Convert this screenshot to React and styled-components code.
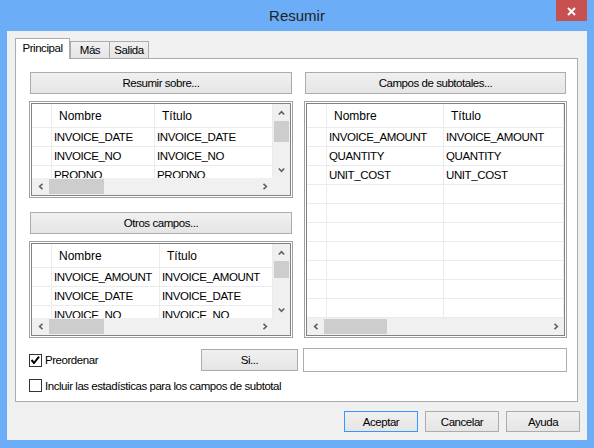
import React from "react";
import styled, { createGlobalStyle } from "styled-components";

const Global = createGlobalStyle`
  html, body { margin: 0; padding: 0; }
  body {
    width: 594px; height: 448px; overflow: hidden;
    font-family: "Liberation Sans", Arial, sans-serif; color: #000;
  }
  * { box-sizing: border-box; }
`;

const Window = styled.div`
  width: 594px; height: 448px; background: #6badf6;
  display: flex; flex-direction: column; padding: 0 7px 8px;
`;

const TitleBar = styled.div`
  height: 31px; flex: none;
  display: grid; grid-template-columns: 1fr auto 1fr; align-items: center;
`;

const Title = styled.div`
  grid-column: 2; font-size: 15px; color: #222; padding-bottom: 1px;
`;

const CloseButton = styled.div`
  grid-column: 3; justify-self: end; align-self: start;
  width: 31px; height: 21px; background: #c75050;
  display: flex; align-items: center; justify-content: center; padding-top: 1px;
`;

const Client = styled.div`
  flex: 1; background: #f0f0f0; display: flex; flex-direction: column;
  padding: 7px 7px 8px 8px;
`;

const TabStrip = styled.div`
  display: flex; align-items: flex-end; height: 20px; flex: none;
  position: relative; z-index: 1;
`;

const Tab = styled.div`
  width: ${p => p.$w}px;
  height: ${p => (p.$active ? 21 : 17)}px;
  margin-bottom: ${p => (p.$active ? -1 : 0)}px;
  margin-left: ${p => p.$ml || 0}px;
  border: 1px solid #acacac; border-bottom: none;
  background: ${p => (p.$active ? "#fff" : "linear-gradient(#f0f0f0, #e5e5e5)")};
  display: flex; align-items: center; justify-content: center;
  padding-bottom: ${p => (p.$active ? 2 : 0)}px;
  font-size: 11.5px; letter-spacing: -0.45px;
`;

const Panel = styled.div`
  background: #fff; border: 1px solid #acacac; margin-right: 2px;
  padding: 13px 10px 9px 13px; display: flex; flex-direction: column;
`;

const Columns = styled.div`
  display: grid; grid-template-columns: 264px 263px; column-gap: 11px;
  height: 266px;
`;

const Column = styled.div`
  display: flex; flex-direction: column; gap: ${p => p.$gap}px; min-height: 0;
`;

const Button = styled.button`
  display: block; font-family: inherit; font-size: 11.5px; letter-spacing: -0.45px; color: #000;
  height: ${p => p.$h || 22}px;
  width: ${p => (p.$w ? `${p.$w}px` : "auto")};
  margin: ${p => (p.$wide ? "0 1px" : "0")};
  flex: none; padding: 0;
  border: 1px solid ${p => (p.$default ? "#3399ff" : "#acacac")};
  background: linear-gradient(#f0f0f0, #e5e5e5);
`;

const GridFrame = styled.div`
  height: ${p => (p.$h ? `${p.$h}px` : "auto")};
  flex: ${p => (p.$grow ? 1 : "none")};
  border: 1px solid #a0a0a0; padding: 1px; background: #fff; min-height: 0;
`;

const GridBody = styled.div`
  height: 100%; border: 1px solid #828282;
  display: grid;
  grid-template-columns: ${p => (p.$v ? "1fr 17px" : "1fr")};
  grid-template-rows: 1fr 17px;
  overflow: hidden;
`;

const TableArea = styled.div`
  overflow: hidden; min-width: 0; min-height: 0;
`;

const Row = styled.div`
  display: grid; grid-template-columns: ${p => p.$cols};
  height: ${p => (p.$header ? 24 : 19)}px; flex: none;
  border-bottom: 1px solid #ebebeb;
`;

const HeadCell = styled.div`
  border-right: 1px solid #ebebeb; padding-left: 7px;
  display: flex; align-items: center; font-size: 12px; white-space: nowrap; overflow: hidden;
`;

const Cell = styled.div`
  border-right: 1px solid #ebebeb; padding-left: 2px;
  font-size: 11.5px; letter-spacing: -0.4px; line-height: 18px;
  white-space: nowrap; overflow: hidden;
`;

const VBar = styled.div`
  background: #f0f0f0; display: flex; flex-direction: column; min-height: 0;
`;

const HBar = styled.div`
  background: #f0f0f0; display: flex; min-width: 0;
`;

const ArrowBox = styled.div`
  flex: none; width: 17px; height: 17px;
  display: flex; align-items: center; justify-content: center;
`;

const Track = styled.div`
  flex: 1; display: flex; flex-direction: ${p => (p.$v ? "column" : "row")}; min-width: 0; min-height: 0;
`;

const Thumb = styled.div`
  flex: none; background: #cdcdcd;
  ${p => (p.$v ? `height: ${p.$size}px; margin: 0 1px;` : `width: ${p.$size}px; margin: 1px 0;`)}
`;

const Corner = styled.div`
  background: #f0f0f0;
`;

const BottomRow = styled.div`
  display: flex; align-items: center; height: 24px; margin-top: ${p => p.$mt}px;
`;

const CheckRow = styled.div`
  display: flex; align-items: center; gap: 3px; flex: ${p => (p.$grow ? 1 : "none")};
  font-size: 11.5px; letter-spacing: -0.45px; height: 13px;
`;

const Box = styled.span`
  flex: none; width: 13px; height: 13px; border: 1px solid #333; background: #fff;
  display: flex; align-items: center; justify-content: center;
`;

const TextField = styled.div`
  width: 264px; height: 24px; margin-left: 5px; border: 1px solid #abadb3; background: #fff;
`;

const DialogButtons = styled.div`
  display: flex; justify-content: flex-end; gap: 7px; margin-top: 9px;
`;

const Chevron = ({ dir }) => {
  const v = dir === "up" || dir === "down";
  const pts = {
    up: "0.8,4.5 3.5,1.6 6.2,4.5",
    down: "0.8,1.5 3.5,4.4 6.2,1.5",
    left: "4.5,0.8 1.6,3.5 4.5,6.2",
    right: "1.5,0.8 4.4,3.5 1.5,6.2",
  }[dir];
  return (
    <svg width={v ? 7 : 6} height={v ? 6 : 7} viewBox={v ? "0 0 7 6" : "0 0 6 7"}>
      <polyline points={pts} fill="none" stroke="#606060" strokeWidth="1.6" />
    </svg>
  );
};

const DataGrid = ({ cols, rows, vThumb, hThumb, height, grow, empty = 0 }) => {
  const v = vThumb != null;
  const all = [...rows, ...Array.from({ length: empty }, () => ["", ""])];
  return (
    <GridFrame $h={height} $grow={grow}>
      <GridBody $v={v}>
        <TableArea>
          <Row $cols={cols} $header>
            <HeadCell />
            <HeadCell>Nombre</HeadCell>
            <HeadCell>Título</HeadCell>
          </Row>
          {all.map((r, i) => (
            <Row key={i} $cols={cols}>
              <Cell />
              <Cell>{r[0]}</Cell>
              <Cell>{r[1]}</Cell>
            </Row>
          ))}
        </TableArea>
        {v && (
          <VBar>
            <ArrowBox><Chevron dir="up" /></ArrowBox>
            <Track $v><Thumb $v $size={vThumb} /></Track>
            <ArrowBox><Chevron dir="down" /></ArrowBox>
          </VBar>
        )}
        <HBar>
          <ArrowBox><Chevron dir="left" /></ArrowBox>
          <Track><Thumb $size={hThumb} /></Track>
          <ArrowBox><Chevron dir="right" /></ArrowBox>
        </HBar>
        {v && <Corner />}
      </GridBody>
    </GridFrame>
  );
};

const CheckMark = () => (
  <svg width="11" height="11" viewBox="0 0 11 11">
    <polyline points="1.5,5 4,8 9,1.6" fill="none" stroke="#000" strokeWidth="2" />
  </svg>
);

export default function App() {
  return (
    <>
      <Global />
      <Window>
        <TitleBar>
          <Title>Resumir</Title>
          <CloseButton>
            <svg width="9" height="9" viewBox="0 0 9 9">
              <path d="M1 1 L8 8 M8 1 L1 8" stroke="#fff" strokeWidth="2" />
            </svg>
          </CloseButton>
        </TitleBar>
        <Client>
          <TabStrip>
            <Tab $active $w={55}>Principal</Tab>
            <Tab $w={40}>Más</Tab>
            <Tab $w={40} $ml={-1}>Salida</Tab>
          </TabStrip>
          <Panel>
            <Columns>
              <Column $gap={14}>
                <Column $gap={7}>
                  <Button $wide>Resumir sobre...</Button>
                  <DataGrid
                    height={97}
                    cols="20px 103px 118px"
                    rows={[
                      ["INVOICE_DATE", "INVOICE_DATE"],
                      ["INVOICE_NO", "INVOICE_NO"],
                      ["PRODNO", "PRODNO"],
                    ]}
                    vThumb={21}
                    hThumb={55}
                  />
                </Column>
                <Column $gap={7}>
                  <Button $wide>Otros campos...</Button>
                  <DataGrid
                    height={97}
                    cols="20px 108px 113px"
                    rows={[
                      ["INVOICE_AMOUNT", "INVOICE_AMOUNT"],
                      ["INVOICE_DATE", "INVOICE_DATE"],
                      ["INVOICE_NO", "INVOICE_NO"],
                    ]}
                    vThumb={17}
                    hThumb={55}
                  />
                </Column>
              </Column>
              <Column $gap={7}>
                <Button $wide>Campos de subtotales...</Button>
                <DataGrid
                  grow
                  cols="20px 117px 120px"
                  rows={[
                    ["INVOICE_AMOUNT", "INVOICE_AMOUNT"],
                    ["QUANTITY", "QUANTITY"],
                    ["UNIT_COST", "UNIT_COST"],
                  ]}
                  empty={8}
                  hThumb={63}
                />
              </Column>
            </Columns>
            <BottomRow $mt={10}>
              <CheckRow $grow>
                <Box><CheckMark /></Box>
                <span>Preordenar</span>
              </CheckRow>
              <Button $w={97}>Si...</Button>
              <TextField />
            </BottomRow>
            <CheckRow style={{ marginTop: 7 }}>
              <Box />
              <span>Incluir las estadísticas para los campos de subtotal</span>
            </CheckRow>
          </Panel>
          <DialogButtons>
            <Button $w={74} $h={21} $default>Aceptar</Button>
            <Button $w={74} $h={21}>Cancelar</Button>
            <Button $w={74} $h={21}>Ayuda</Button>
          </DialogButtons>
        </Client>
      </Window>
    </>
  );
}
